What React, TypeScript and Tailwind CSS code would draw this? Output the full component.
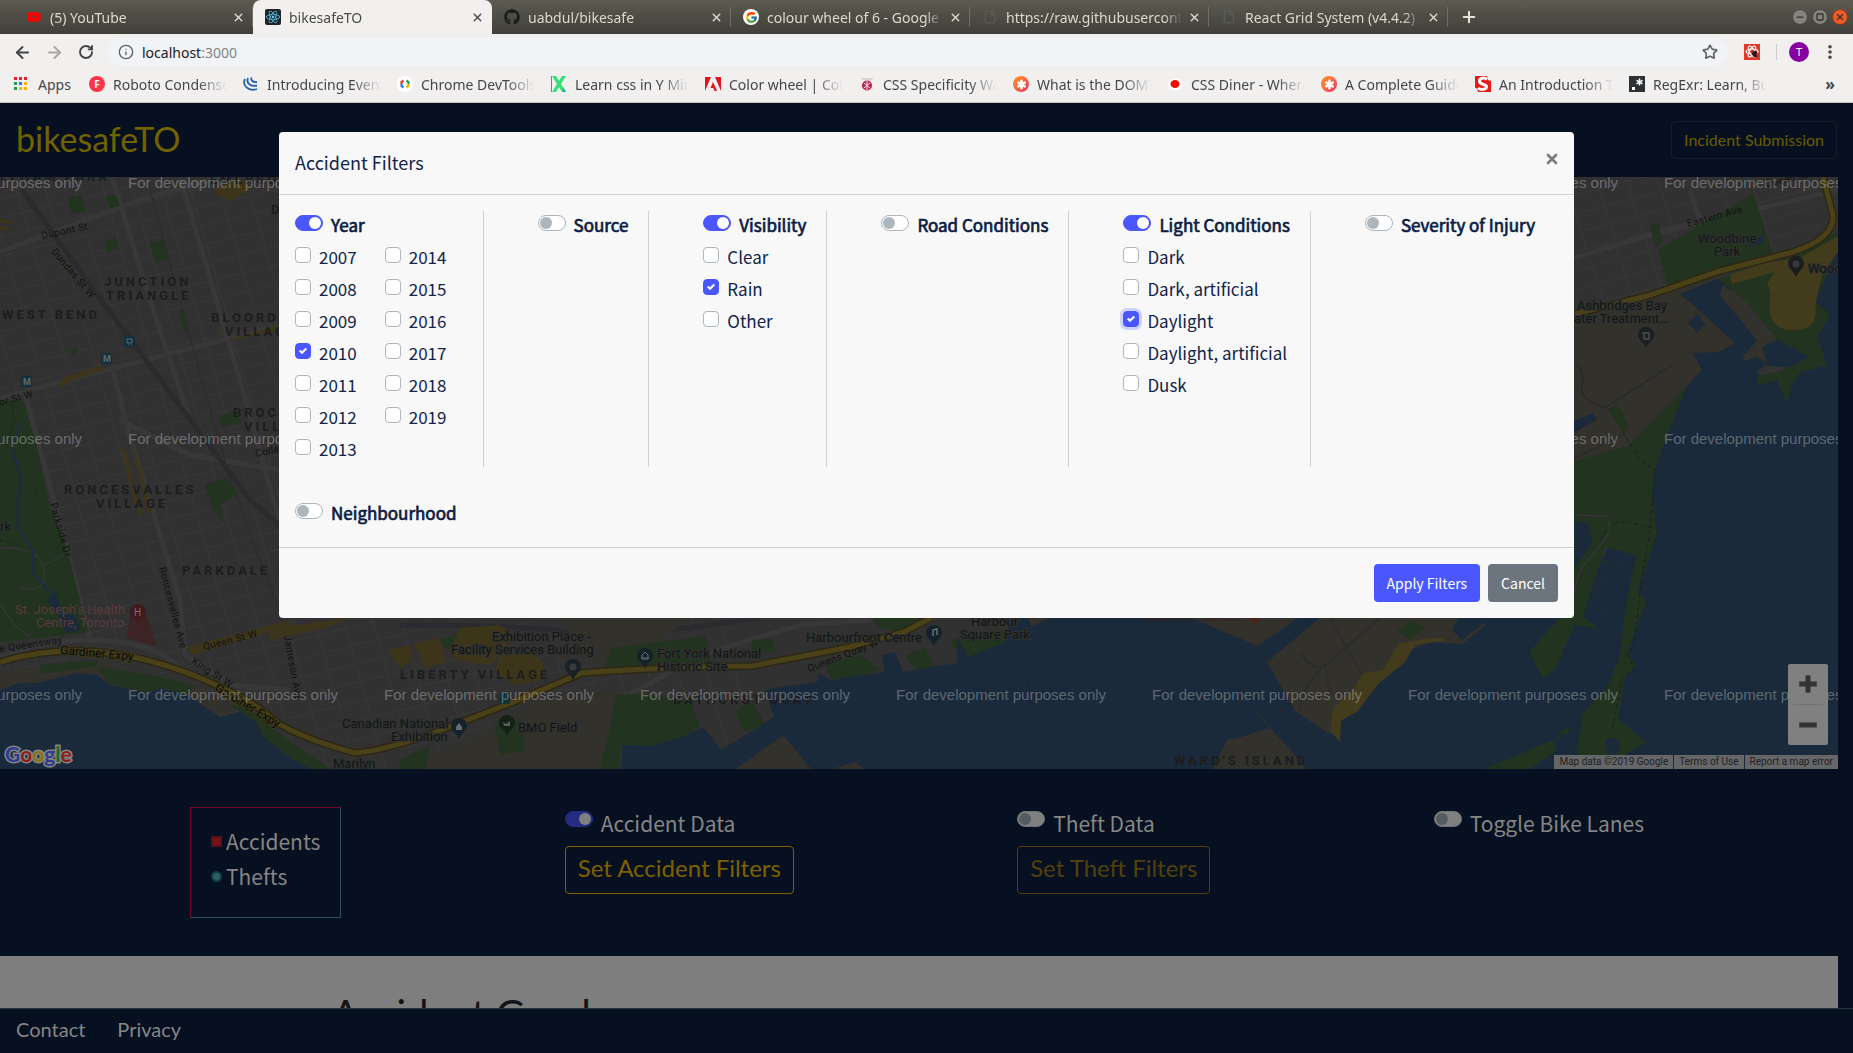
import React, { useState } from "react";
import { FaGithub, FaReact, FaYoutube } from "react-icons/fa";
import { FcGoogle } from "react-icons/fc";
import { ArrowLeft, ArrowRight, Asterisk, EllipsisVertical, File, Info, Minus, Plus, RotateCw, Square, Star, X } from "lucide-react";

/* ---------- Browser frame ---------- */

const GoogleBadge = () => (
  <span className="flex size-4 items-center justify-center rounded-full bg-white">
    <FcGoogle size={13} />
  </span>
);

const tabs = [
  { title: "(5) YouTube", icon: <FaYoutube size={14} color="#ff0000" /> },
  {
    title: "bikesafeTO",
    active: true,
    icon: (
      <span className="flex size-4 items-center justify-center rounded-xs bg-[#20232a]">
        <FaReact size={14} color="#5ed3f3" />
      </span>
    ),
  },
  { title: "uabdul/bikesafe", icon: <FaGithub size={16} color="#1c1c1a" /> },
  { title: "colour wheel of 6 - Google Search", icon: <GoogleBadge /> },
  { title: "https://raw.githubusercontent.com", icon: <File size={14} color="#5d5d58" strokeWidth={2} /> },
  { title: "React Grid System (v4.4.2)", icon: <File size={14} color="#5d5d58" strokeWidth={2} /> },
];

function TabStrip() {
  return (
    <div className="flex h-[34px] shrink-0 items-stretch bg-linear-to-b from-[#5c5b50] to-[#403f3a] pl-[14px]">
      {tabs.map((t) => (
        <div
          key={t.title}
          className={
            t.active
              ? "flex w-[239px] min-w-0 items-center rounded-t-lg bg-[#f2f0ef] pl-3 text-[#4a4a48]"
              : "flex w-[239px] min-w-0 items-center pl-3 text-[#dcd9cd]"
          }
        >
          <span className="flex w-4 shrink-0 justify-center">{t.icon}</span>
          <span className="ml-2 min-w-0 flex-1 overflow-hidden mask-r-from-90% text-[14px] whitespace-nowrap">{t.title}</span>
          <button aria-label={"Close " + t.title} className="mr-[6px] ml-1 flex w-4 shrink-0 justify-center">
            <X size={13} strokeWidth={2.5} />
          </button>
          <span className={t.active ? "h-5 w-px shrink-0" : "h-5 w-px shrink-0 bg-[#6e6d66]"} />
        </div>
      ))}
      <button aria-label="New tab" className="ml-3 text-[#e5e2d8]">
        <Plus size={18} strokeWidth={2.8} />
      </button>
      <div className="ml-auto flex items-center gap-1 pr-[5px] text-[#33322e]">
        <button aria-label="Minimise" className="flex size-4 items-center justify-center rounded-full border border-[#45443f] bg-[#85847c]">
          <Minus size={10} strokeWidth={3} />
        </button>
        <button aria-label="Maximise" className="flex size-4 items-center justify-center rounded-full border border-[#45443f] bg-[#85847c]">
          <Square size={8} strokeWidth={4} />
        </button>
        <button aria-label="Close window" className="flex size-4 items-center justify-center rounded-full border border-[#8a3a1d] bg-[#ef5a29]">
          <X size={10} strokeWidth={3} />
        </button>
      </div>
    </div>
  );
}

function Toolbar() {
  return (
    <div className="flex h-9 shrink-0 items-center bg-[#f2f0ef] pr-[14px] pl-3">
      <button aria-label="Back" className="flex w-5 justify-center text-[#444]">
        <ArrowLeft size={19} strokeWidth={2.5} />
      </button>
      <button aria-label="Forward" className="ml-3 flex w-5 justify-center text-[#a9a8a6]">
        <ArrowRight size={19} strokeWidth={2.5} />
      </button>
      <button aria-label="Reload" className="ml-3 flex w-5 justify-center text-[#444]">
        <RotateCw size={16} strokeWidth={2.8} />
      </button>
      <div className="ml-3 flex h-7 flex-1 items-center rounded-full bg-[#f1f3f6] px-[10px]">
        <Info size={16} color="#5f6368" />
        <span className="relative ml-2 flex-1 text-[14px]">
          <input
            aria-label="Address"
            defaultValue="localhost:3000"
            className="absolute inset-0 w-full bg-transparent text-transparent outline-none"
          />
          <span className="text-[#202124]">localhost</span>
          <span className="text-[#80868b]">:3000</span>
        </span>
        <button aria-label="Bookmark this page">
          <Star size={16} color="#5f6368" strokeWidth={2.5} />
        </button>
      </div>
      <span className="ml-4 flex size-4 items-center justify-center bg-[#e0392b]">
        <svg viewBox="0 0 16 16" className="size-4" fill="none" stroke="#fff" strokeWidth="1.200">
          <ellipse cx="8" cy="7.500" rx="6" ry="2.500" />
          <ellipse cx="8" cy="7.500" rx="6" ry="2.500" transform="rotate(60 8 7.500)" />
          <ellipse cx="8" cy="7.500" rx="6" ry="2.500" transform="rotate(120 8 7.500)" />
          <path d="M9 7l4 6M8 9l3 4M11 7l2 3" stroke="#2a1a18" strokeWidth="2" />
        </svg>
      </span>
      <span className="ml-4 h-4 w-px bg-[#cfcdcb]" />
      <span className="ml-3 flex size-5 items-center justify-center rounded-full bg-[#8400a0] text-[11px] text-white">T</span>
      <button aria-label="Menu" className="ml-3 text-[#444]">
        <EllipsisVertical size={18} strokeWidth={2.8} />
      </button>
    </div>
  );
}

const AsteriskBadge = () => (
  <span className="flex size-4 items-center justify-center rounded-full bg-linear-to-br from-[#ff9800] to-[#ee1458]">
    <Asterisk size={15} color="#fff" strokeWidth={4} />
  </span>
);

const bookmarks = [
  {
    t: "Roboto Condensed",
    icon: <span className="flex size-4 items-center justify-center rounded-full bg-[#fb3449] text-[10px] font-bold text-white">F</span>,
  },
  {
    t: "Introducing Events",
    icon: (
      <svg viewBox="0 0 16 16" className="size-4" fill="none" stroke="#1f5fa8" strokeWidth="1.800">
        <path d="M2 3c-3 6 3 13 12 10M5 2c-2 5 2 9 9 7.500M8.500 1.500c-1 3 1.500 5 5.500 4.500" />
      </svg>
    ),
  },
  {
    t: "Chrome DevTools",
    icon: (
      <svg viewBox="0 0 16 16" className="size-4" fill="none" strokeWidth="2.200">
        <circle cx="8" cy="8" r="8" fill="#fff" />
        <path d="M6.500 4.500 4.500 6v2" stroke="#e33b2e" />
        <path d="M4.500 8v2l2 1.500" stroke="#2f7be5" />
        <path d="m9.500 4.500 2 1.500v2" stroke="#1e9e55" />
        <path d="M11.500 8v2l-2 1.500" stroke="#f4b400" />
      </svg>
    ),
  },
  {
    t: "Learn css in Y Minutes",
    icon: (
      <svg viewBox="0 0 16 16" className="size-4">
        <path d="M1 0h4l10 16h-4z" fill="#3ddc74" />
        <path d="M11 0h4L5 16H1z" fill="#35e07e" />
        <path d="M0 0h1v16H0zM12 11l3 5h-3z" fill="#12a0e0" />
      </svg>
    ),
  },
  {
    t: "Color wheel | Color schemes",
    icon: (
      <svg viewBox="0 0 16 16" className="size-4">
        <path d="M0 1h6L0 15zM10 1h6v14zM8 6l4 9H9.500L8.300 12H5.500z" fill="#e1151b" />
      </svg>
    ),
  },
  {
    t: "CSS Specificity Wars",
    icon: (
      <svg viewBox="0 0 16 16" className="size-4">
        <path d="M1 2h14l-3 2H4z" fill="#d5d3d2" />
        <circle cx="8" cy="9.500" r="5" fill="#c2224f" />
        <path d="m5 7 6 5M11 7l-6 5M8 5v9" stroke="#f2f0ef" />
      </svg>
    ),
  },
  { t: "What is the DOM?", icon: <AsteriskBadge /> },
  {
    t: "CSS Diner - Where we feast",
    icon: (
      <svg viewBox="0 0 16 16" className="size-4">
        <ellipse cx="8" cy="8.500" rx="7.500" ry="6" fill="#fff" />
        <ellipse cx="8" cy="8" rx="4.500" ry="4" fill="#ee1000" />
      </svg>
    ),
  },
  { t: "A Complete Guide", icon: <AsteriskBadge /> },
  {
    t: "An Introduction To",
    icon: (
      <svg viewBox="0 0 16 16" className="size-4">
        <path d="M0 0h16v16H0z" fill="#ea1a14" />
        <path d="M0 12c2-1 2 2 3 4H0zM16 0v5l-3-1-1-4z" fill="#f2f0ef" />
        <path d="M12 3.500C9.500 1 4 2 4.500 5.500S12 8 11.500 11 5 14 3 12" fill="none" stroke="#fff" strokeWidth="3" />
      </svg>
    ),
  },
  {
    t: "RegExr: Learn, Build",
    icon: (
      <span className="flex size-4 items-center justify-center bg-[#2c3135]">
        <svg viewBox="0 0 16 16" className="size-4" stroke="#fff" strokeWidth="1.500">
          <path d="M3 11h3v3H3z" fill="#fff" stroke="none" />
          <path d="M10.500 2.500v7M7.500 4.300l6 3.500M13.500 4.300l-6 3.500" />
        </svg>
      </span>
    ),
  },
];

const appColours = ["#ea1c2c", "#ea1c2c", "#ea1c2c", "#1e9e55", "#3b78e7", "#f4b400", "#1e9e55", "#f4b400", "#f4b400"];

function BookmarksBar() {
  return (
    <div className="flex h-[33px] shrink-0 items-center border-b border-[#c9c7c5] bg-[#f2f0ef] pb-1 pl-[14px] text-[14px] text-[#45454a]">
      <a href="#apps" className="flex items-center">
        <svg viewBox="0 0 14 14" className="size-[14px]">
          {appColours.map((c, i) => (
            <rect key={i} x={(i % 3) * 5} y={Math.floor(i / 3) * 5} width="3" height="3" fill={c} />
          ))}
        </svg>
        <span className="ml-[10px] w-[51px]">Apps</span>
      </a>
      {bookmarks.map((b) => (
        <a key={b.t} href="#bookmark" className="flex w-[154px] shrink-0 items-center gap-2 pr-4">
          <span className="shrink-0">{b.icon}</span>
          <span className="flex-1 overflow-hidden mask-r-from-75% whitespace-nowrap">{b.t}</span>
        </a>
      ))}
      <button aria-label="More bookmarks" className="mr-[18px] ml-auto text-[16px] font-bold">
        »
      </button>
    </div>
  );
}

/* ---------- Map ---------- */

const C = {
  land: "#313131",
  road: "#383838",
  street: "#363636",
  rail: "#2b2b2f",
  brown: "#32312c",
  green: "#22331f",
  water: "#1b2a3a",
  sand: "#423c1c",
  hwy: "#4a4118",
  hwyEdge: "#2d2815",
};

const watermark = [-128, 128, 384, 640, 896, 1152, 1408, 1664];

const Pin = ({ x, y, fill = "#15222a", children }: { x: number; y: number; fill?: string; children?: React.ReactNode }) => (
  <g>
    <path d={`M${x} ${y + 17}c-2-6-8-8-8-13a8 8 0 1 1 16 0c0 5-6 7-8 13z`} fill={fill} />
    {children ?? <circle cx={x} cy={y + 4} r="3.500" fill="#3a3a3a" />}
  </g>
);

const Area = ({ x, y, s = 13, children }: { x: number; y: number; s?: number; children: string }) => (
  <text x={x} y={y} fontSize={s} fontWeight="700" letterSpacing="3" fill="#1c1d1e">
    {children}
  </text>
);

function MapView() {
  const longStreets = Array.from({ length: 42 }, (_, i) => 180 + i * 19);
  const crossStreets = Array.from({ length: 28 }, (_, i) => -190 + i * 29);
  const eastStreets = Array.from({ length: 11 }, (_, i) => 1440 + i * 31);
  return (
    <svg
      viewBox="0 177 1838 592"
      preserveAspectRatio="xMinYMin slice"
      className="block h-full w-full font-[Roboto,sans-serif]"
      role="img"
      aria-label="Map of Toronto"
    >
      <rect x="0" y="177" width="1838" height="592" fill={C.land} />
      <g stroke={C.street} strokeWidth="1.500">
        {longStreets.map((y) => (
          <path key={y} d={`M0 ${y}L620 ${y - 150}`} />
        ))}
        {crossStreets.map((x) => (
          <path key={x} d={`M${x} 177L${x + 170} 769`} />
        ))}
        {longStreets.slice(0, 14).map((y) => (
          <path key={"e" + y} d={`M1560 ${y}L1838 ${y - 74}`} />
        ))}
        {eastStreets.map((x) => (
          <path key={"e" + x} d={`M${x} 177L${x + 70} 400`} />
        ))}
      </g>
      <g stroke={C.road} strokeWidth="5" fill="none">
        <path d="M0 252L140 200 220 177" />
        <path d="M0 398L30 390 280 325" />
        <path d="M112 177L150 300 190 420" />
        <path d="M180 177L240 380 279 520" />
        <path d="M24 390L68 553 90 640" />
        <path d="M112 365L125 420 180 600 185 655" />
        <path d="M120 420L190 455 280 470" />
        <path d="M620 700L700 655 800 625 900 618" />
        <path d="M1560 262L1660 232 1838 190" />
        <path d="M1690 190L1715 270" />
        <path d="M185 655L230 685 290 690" />
      </g>
      <g fill="none" stroke={C.rail} strokeWidth="5">
        <path d="M22 190L90 285 250 500 285 530" />
        <path d="M400 625Q520 625 570 632T760 618" />
      </g>
      <path d="M150 190L185 320 230 480 290 640" fill="none" stroke={C.rail} strokeWidth="1" />

      {/* industrial land */}
      <g fill={C.brown}>
        <path d="M1560 320L1720 275 1745 330 1690 390 1628 446 1560 470z" />
        <path d="M560 618H690L640 655 590 665z" />
        <path d="M540 700L620 690 610 769H390L470 740z" />
        <path d="M0 672L97 662 200 688 240 715 180 715 0 695z" />
      </g>

      {/* parks */}
      <g fill={C.green}>
        <path d="M0 402L23 400 37 447 48 500 68 553 88 632 0 642z" />
        <path d="M67 197L82 196 86 211 72 214z" />
        <path d="M106 197L116 195 120 206 110 208z" />
        <path d="M105 242L116 238 119 249 107 252z" />
        <path d="M150 243L162 240 168 259 156 263z" />
        <path d="M179 311L184 309 189 330 184 331z" />
        <path d="M70 350L76 347 78 354 73 355z" />
        <path d="M219 418L232 412 243 422 222 427z" />
        <path d="M205 484L226 478 237 493 220 505 224 522 213 510z" />
        <path d="M97 667L150 675 195 685 187 695 147 692 110 684z" />
        <path d="M40 665L97 660 97 666 40 674z" />
        <path d="M227 703L250 709 285 738 330 769H295L263 740 257 723 240 712z" />
        <path d="M604 670L612 648 705 636 711 660 680 665z" />
        <path d="M752 640L772 638 775 650 752 655z" />
        <path d="M615 695L640 694 690 700 700 726 680 738 650 746 622 745 618 769H600L612 720z" />
        <path d="M735 712L752 700 765 725 745 732z" />
        <path d="M400 760L430 745 425 769H400z" />
        <path d="M495 725L520 720 525 750 500 755z" />
        <path d="M440 640L462 632 468 645 448 650z" />
        <path d="M870 618H930L905 632 880 628z" />
        <path d="M825 665L860 655 880 670 850 680 830 678z" />
        <path d="M905 655L925 648 935 668 918 672zM950 640L1003 630V645L962 660z" />
        <path d="M1658 250L1753 193 1773 254 1668 285z" />
        <path d="M1650 225L1658 222 1663 242 1655 246z" />
      </g>
      <path d="M12 402L14 420 6 450M28 490H47M0 540L20 545" stroke="#1a281a" fill="none" strokeDasharray="3 3" />
      <path d="M0 548Q40 545 44 570T20 587M44 565L68 553M0 605L15 625 30 637" fill="none" stroke="#303530" strokeWidth="2" />

      {/* commercial strips */}
      <g fill="#3d351a">
        <path d="M215 190L238 178 252 188 240 195 230 200 216 195z" />
        <path d="M62 378L100 366 103 370 68 382 62 390 60 384z" />
        <path d="M228 340L278 325V330L230 341zM219 326h3v8h-3z" />
        <path d="M0 218L14 222V224L0 222zM0 227h9v3H0z" />
        <path d="M121 441L127 455 135 490 143 515 139 515 131 490 123 455z" />
        <path d="M132 447L138 460 152 512 147 512z" />
        <path d="M187 647L290 620V626L192 655z" />
        <path d="M270 628L350 618 325 628 270 640z" />
        <path d="M388 650L410 645 412 660 400 668zM414 644L440 638 446 662 425 668zM450 650L460 628 500 625 515 635 490 665 455 660z" />
        <path d="M500 655L530 652 545 665 540 680 515 685 495 672z" />
      </g>

      {/* highway west */}
      <path d="M0 657Q60 636 110 641T180 668" fill="none" stroke={C.road} strokeWidth="5" />
      <path
        d="M0 662Q50 647 100 652T200 678T270 717T355 753Q390 750 449 727L511 703 582 673Q620 670 672 668T752 666L850 647 904 632 931 618"
        fill="none"
        stroke={C.hwyEdge}
        strokeWidth="8"
      />
      <path
        d="M0 662Q50 647 100 652T200 678T270 717T355 753Q390 750 449 727L511 703 582 673Q620 670 672 668T752 666L850 647 904 632 931 618"
        fill="none"
        stroke={C.hwy}
        strokeWidth="5"
      />

      {/* water */}
      <g fill={C.water}>
        <path d="M0 690L20 683 37 683 77 673 97 675 110 685 147 693 160 688 187 695 220 717 240 712 257 723 263 737 290 757 310 769H0z" />
        <path d="M620 769L623 745 650 746 680 738 703 727 721 750 774 717 765 690 779 687 817 682 819 673 830 680 850 677 885 672 882 655 895 652 903 672 957 663 957 637 968 657 1003 643 1012 618H1600V769z" />
        <path d="M1838 240L1815 302 1830 314 1817 337 1827 365 1800 372 1790 388 1787 403 1777 380 1760 376 1757 372 1765 365 1793 368 1810 357 1777 339 1760 345 1767 362 1757 357 1745 361 1742 357 1757 341 1747 326 1720 294 1733 288 1717 279 1680 294 1692 304 1735 343 1720 352 1693 353 1702 370 1687 386 1660 440 1574 618V769H1838z" />
        <path d="M1705 325L1698 314 1688 323 1697 333z" />
        <path d="M1574 421L1593 413 1597 419 1574 433z" />
        <path d="M1755 240L1764 234 1763 243 1745 247z" />
        <path d="M47 600L55 590 62 612 75 615 80 630 65 632 60 618z" />
      </g>
      <path d="M21 422L12 447 22 480 17 500 18 527 33 550 33 573 50 593" fill="none" stroke="#1a2c48" strokeWidth="2" />

      {/* islands, piers and the spit */}
      <g fill={C.brown}>
        <path d="M736 769L783 735 811 769zM832 769L855 762 864 769z" />
        <path d="M1029 618L1031 627 1049 618zM1191 618L1258 646 1298 618z" />
        <path d="M1320 618L1267 662 1296 712 1330 734 1379 683 1403 653 1430 642 1462 644 1486 625 1484 623 1462 640 1452 630 1458 618z" />
        <path d="M1213 769L1227 740 1241 737 1270 728 1288 747 1306 769z" />
      </g>
      <path d="M1254 708L1270 728" stroke={C.brown} />
      <path
        d="M1380 618L1320 670Q1300 690 1300 712M1300 652Q1312 672 1325 665L1330 695M1330 618L1365 680"
        fill="none"
        stroke="#2b2b2d"
        strokeWidth="1.500"
      />
      <path
        d="M1399 643L1432 638 1444 638 1444 641 1415 645 1405 662 1379 683 1357 712 1341 720 1340 742 1331 732 1332 710 1355 687 1363 673 1383 670z"
        fill={C.sand}
      />
      <g fill={C.green}>
        <path d="M1687 386L1667 435 1655 470 1652 493 1657 534 1638 592 1647 602 1640 617 1628 652 1636 666 1625 676 1618 719 1646 742 1623 756 1590 769H1575L1582 715 1607 687 1620 656 1625 610 1636 555 1605 547 1583 617 1599 629 1575 625 1555 670 1543 678 1529 652 1560 618V465L1628 446z" />
        <path d="M1608 409L1618 404 1629 428 1623 432z" />
        <path d="M1484 769L1513 757 1553 740 1557 750 1530 769zM1555 738L1568 726 1570 732z" />
        <path d="M1717 279L1770 262 1838 232 1838 250 1815 302 1830 314 1817 337 1827 365 1800 372 1790 388 1787 403 1777 380 1757 385 1757 376 1780 372 1810 357 1777 339 1745 300z" />
        <path d="M1397 630L1412 620 1425 628 1410 640z" />
      </g>
      <path d="M1722 285L1745 300 1750 320 1777 340 1762 347 1767 362 1757 357 1742 358 1757 341 1745 325 1720 296z" fill={C.brown} />
      <path d="M1574 522L1588 522 1592 543 1575 569z" fill={C.water} />
      <path d="M1605 740Q1620 735 1620 745T1608 756z" fill={C.water} />
      <path d="M1730 275L1768 262 1800 258 1838 236V252L1822 275 1815 305Q1820 330 1793 330T1770 300Q1772 292 1767 283L1775 272 1732 284z" fill={C.sand} />
      <path d="M1575 314L1647 296 1720 271 1793 252Q1835 238 1833 215L1823 177" fill="none" stroke={C.hwyEdge} strokeWidth="8" />
      <path d="M1575 314L1647 296 1720 271 1793 252Q1835 238 1833 215L1823 177" fill="none" stroke={C.hwy} strokeWidth="5" />
      <path
        d="M1623 432L1640 460 1655 470 1650 530 1640 590 1635 640 1628 655 1634 668 1622 680 1612 730"
        fill="none"
        stroke="#16221a"
        strokeDasharray="4 3"
      />
      <path d="M1600 540Q1612 520 1625 522T1652 528" fill="none" stroke="#16221a" strokeDasharray="4 3" />
      <path d="M1575 515L1607 516Q1615 530 1600 545L1588 560Q1578 570 1575 590" fill="none" stroke="#343534" strokeWidth="1.500" />
      <path d="M1574 362Q1585 370 1582 385T1605 408L1672 365M1574 458L1625 434" fill="none" stroke="#2a2a2c" strokeWidth="1.500" />
      <path
        d="M1603 561L1625 567M1601 570L1622 576M1598 579L1619 585M1595 588L1617 594M1592 597L1612 603M1588 606L1608 612"
        stroke="#252d31"
      />
      <path d="M1018 645Q1020 720 960 769M1020 645Q1035 700 1030 769M1020 640L1128 766" fill="none" stroke="#182433" strokeDasharray="5 4" />

      {/* hospital */}
      <path d="M131 612L146 614 156 646 127 638z" fill="#3d2323" />
      <Pin x={138} y={608} fill="#421a1c">
        <text x="134" y="616" fontSize="10" fill="#7c6a6a">
          H
        </text>
      </Pin>

      {/* transit stations */}
      <g fill="#13303c">
        <rect x="124" y="336" width="11" height="11" rx="2" />
        <rect x="101" y="353" width="11" height="11" rx="2" />
        <rect x="21" y="376" width="11" height="11" rx="2" />
        <rect x="499" y="693" width="11" height="11" rx="2" />
      </g>
      <g fill="#5b6c72" fontSize="9" fontWeight="700">
        <text x="103" y="362">
          M
        </text>
        <text x="23" y="385">
          M
        </text>
      </g>
      <path d="M127 339h5v4h-5zM128 345h1M131 345h1" fill="none" stroke="#5b6c72" />

      {/* place names */}
      <Area x={0} y={181}>ELHAM PARK</Area>
      <Area x={210} y={184}>EMERSON</Area>
      <Area x={104} y={286}>JUNCTION</Area>
      <Area x={106} y={300}>TRIANGLE</Area>
      <Area x={2} y={319}>WEST BEND</Area>
      <Area x={211} y={322}>BLOORDALE</Area>
      <Area x={225} y={336}>VILLAGE</Area>
      <Area x={233} y={417}>BROCKTON</Area>
      <Area x={244} y={431}>VILLAGE</Area>
      <Area x={271} y={214}>DUFFERIN</Area>
      <Area x={64} y={494}>RONCESVALLES</Area>
      <Area x={96} y={508}>VILLAGE</Area>
      <Area x={182} y={575}>PARKDALE</Area>
      <Area x={400} y={679}>LIBERTY VILLAGE</Area>
      <Area x={673} y={704}>BATHURST QUAY</Area>
      <Area x={1174} y={765}>WARD'S ISLAND</Area>

      <g fontSize="10" fill="#121212" letterSpacing="0.4">
        <text transform="translate(42 239) rotate(-12)">Dupont St</text>
        <text transform="translate(51 252) rotate(50)">Dundas St W</text>
        <text transform="translate(0 406) rotate(-16)">or St W</text>
        <text transform="translate(50 504) rotate(74)">Parkside Dr</text>
        <text transform="translate(159 568) rotate(75)">Roncesvalles Ave</text>
        <text transform="translate(0 652) rotate(-8)">e Queensway</text>
        <text transform="translate(204 650) rotate(-14)">Queen St W</text>
        <text transform="translate(191 663) rotate(33)">King St W</text>
        <text transform="translate(284 636) rotate(80)">Jameson Ave</text>
        <text transform="translate(256 457) rotate(-12)">College</text>
        <text transform="translate(809 672) rotate(-21)">Queens Quay W</text>
        <text transform="translate(1688 227) rotate(-15)">Eastern Ave</text>
        <text transform="translate(1766 187) rotate(-12)">Queen St E</text>
      </g>
      <g fontSize="12" fill="#0a0a08" stroke="#3d381a" strokeWidth="2" paintOrder="stroke">
        <text transform="translate(60 654) rotate(5)">Gardiner Expy</text>
        <text transform="translate(214 690) rotate(31)">Gardiner Expy</text>
      </g>

      <g fontSize="13" fill="#121617" stroke="#30312f" strokeWidth="2" paintOrder="stroke">
        <text x="492" y="641">
          Exhibition Place -
        </text>
        <text x="451" y="654">
          Facility Services Building
        </text>
        <text x="657" y="658">
          Fort York National
        </text>
        <text x="657" y="671">
          Historic Site
        </text>
        <text x="806" y="642">
          Harbourfront Centre
        </text>
        <text x="971" y="626">
          Harbour
        </text>
        <text x="960" y="639">
          Square Park
        </text>
        <text x="342" y="728">
          Canadian National
        </text>
        <text x="391" y="741">
          Exhibition
        </text>
        <text x="518" y="732">
          BMO Field
        </text>
        <text x="333" y="768">
          Marilyn
        </text>
        <text x="0" y="531">
          rk
        </text>
        <text x="1698" y="243">
          Woodbine
        </text>
        <text x="1714" y="256">
          Park
        </text>
        <text x="1808" y="273">
          Woodbine
        </text>
        <text x="1577" y="310">
          Ashbridges Bay
        </text>
        <text x="1574" y="323">
          ater Treatment...
        </text>
      </g>
      <text x="1146" y="621" fontSize="13" fill="#33221c">
        Cabana Pool Bar
      </text>
      <path d="M1248 618h12l-6 8z" fill="#4a2418" />
      <g fontSize="13" fill="#5a3a3c">
        <text x="15" y="614">
          St. Joseph's Health
        </text>
        <text x="36" y="627">
          Centre, Toronto
        </text>
      </g>
      <Pin x={573} y={663} fill="#1a2126" />
      <Pin x={645} y={652}>
        <path d="M641 658h8M642 655l3-3 3 3v4h-6z" fill="none" stroke="#63706f" />
      </Pin>
      <Pin x={459} y={722}>
        <path d="M456 730v-3l3-4 3 4v3z" fill="#63706f" />
      </Pin>
      <Pin x={507} y={719} fill="#142115">
        <path d="M503 722l3 2 4-3v5h-6z" fill="#56624f" />
      </Pin>
      <Pin x={934} y={629}>
        <path d="M933 636v-6l4-1v6" fill="none" stroke="#63706f" strokeWidth="1.500" />
      </Pin>
      <Pin x={1796} y={260} fill="#1a1d1f" />
      <Pin x={1646} y={331} fill="#1a1f23">
        <path d="M1642 333h8M1643 339h7M1644 334v4M1649 334v4" stroke="#606668" />
      </Pin>

      <g fontSize="15" fill="#fff" fillOpacity="0.3" fontFamily="Liberation Sans, sans-serif">
        {[188, 444, 700].map((y) =>
          watermark.map((x) => (
            <text key={x + "-" + y} x={x} y={y}>
              For development purposes only
            </text>
          )),
        )}
      </g>
      <g fontSize="21" fontWeight="700" stroke="#848484" strokeWidth="3" paintOrder="stroke" fontFamily="Lato, sans-serif">
        <text x="5" y="762">
          <tspan fill="#2f3a90">G</tspan>
          <tspan fill="#8a1f1a">o</tspan>
          <tspan fill="#8a7410">o</tspan>
          <tspan fill="#2f3a90">g</tspan>
          <tspan fill="#16692e">l</tspan>
          <tspan fill="#8a1f1a">e</tspan>
        </text>
      </g>
    </svg>
  );
}

/* ---------- Form controls ---------- */

const slug = (s: string) => s.toLowerCase().replace(/[^a-z0-9]+/g, "-");

function Switch({ id, label, on = false }: { id: string; label: string; on?: boolean }) {
  return (
    <div className="flex h-8 items-start">
      <input
        id={id}
        type="checkbox"
        role="switch"
        defaultChecked={on}
        className="mt-1 h-4 w-7 shrink-0 appearance-none rounded-full border border-[#adb5bd] bg-white before:mt-px before:ml-px before:block before:size-3 before:rounded-full before:bg-[#adb5bd] checked:border-[#4a57ff] checked:bg-[#4a57ff] checked:before:ml-[13px] checked:before:bg-white"
      />
      <label
        htmlFor={id}
        className="ml-2 text-[17px] leading-7 whitespace-nowrap text-[#0b1d42] [-webkit-text-stroke:0.7px_#0b1d42]"
      >
        {label}
      </label>
    </div>
  );
}

function DataSwitch({ id, label, on = false }: { id: string; label: string; on?: boolean }) {
  return (
    <div className="flex h-[39px] items-start">
      <input
        id={id}
        type="checkbox"
        role="switch"
        defaultChecked={on}
        className="mt-1 h-4 w-7 shrink-0 appearance-none rounded-full border border-[#6f7276] bg-[#808080] before:mt-px before:ml-px before:block before:size-3 before:rounded-full before:bg-[#575b5f] checked:border-[#252b80] checked:bg-[#252b80] checked:before:ml-[13px] checked:before:bg-[#808080]"
      />
      <label htmlFor={id} className="ml-2 text-[21px] leading-8 whitespace-nowrap text-[#858585]">
        {label}
      </label>
    </div>
  );
}

function Check({ group, label, on = false, focused = false }: { group: string; label: string; on?: boolean; focused?: boolean }) {
  const id = group + "-" + slug(label);
  return (
    <div className="flex h-8 items-start">
      <span className="relative mt-1 size-4 shrink-0">
        <input
          id={id}
          type="checkbox"
          defaultChecked={on}
          className={
            focused
              ? "peer block size-4 appearance-none rounded border border-[#adb5bd] bg-white ring-3 ring-[#cfd2ff] checked:border-[#4a57ff] checked:bg-[#4a57ff]"
              : "peer block size-4 appearance-none rounded border border-[#adb5bd] bg-white checked:border-[#4a57ff] checked:bg-[#4a57ff]"
          }
        />
        <svg viewBox="0 0 8 8" className="pointer-events-none absolute inset-1 size-2 opacity-0 peer-checked:opacity-100">
          <path fill="#fff" d="M6.564.75l-3.590 3.612-1.538-1.550L0 4.260 2.974 7.250 8 2.193z" />
        </svg>
      </span>
      <label htmlFor={id} className="ml-2 text-[17px] leading-7 whitespace-nowrap">
        {label}
      </label>
    </div>
  );
}

/* ---------- Filter dialog ---------- */

type Option = { label: string; on?: boolean; focused?: boolean };
type Filter = { title: string; on?: boolean; columns: Option[][] };

const filters: Filter[] = [
  {
    title: "Year",
    on: true,
    columns: [
      [{ label: "2007" }, { label: "2008" }, { label: "2009" }, { label: "2010", on: true }, { label: "2011" }, { label: "2012" }, { label: "2013" }],
      [{ label: "2014" }, { label: "2015" }, { label: "2016" }, { label: "2017" }, { label: "2018" }, { label: "2019" }],
    ],
  },
  { title: "Source", columns: [] },
  { title: "Visibility", on: true, columns: [[{ label: "Clear" }, { label: "Rain", on: true }, { label: "Other" }]] },
  { title: "Road Conditions", columns: [] },
  {
    title: "Light Conditions",
    on: true,
    columns: [
      [
        { label: "Dark" },
        { label: "Dark, artificial" },
        { label: "Daylight", on: true, focused: true },
        { label: "Daylight, artificial" },
        { label: "Dusk" },
      ],
    ],
  },
  { title: "Severity of Injury", columns: [] },
];

function FilterDialog({ onClose }: { onClose: () => void }) {
  return (
    <div
      role="dialog"
      aria-modal="true"
      aria-labelledby="dialog-title"
      className="absolute inset-x-0 top-[132px] mx-auto w-[1295px] max-w-full rounded bg-[#f8f8f8] font-['Noto_Sans_CJK_SC',sans-serif] text-[#12244a]"
    >
      <header className="flex items-start justify-between border-b border-[#d0d2d4] px-4 pt-4 pb-[18px]">
        <h2 id="dialog-title" className="text-[18px] leading-7">
          Accident Filters
        </h2>
        <button aria-label="Close" onClick={onClose} className="mt-[3px] -mr-[2px] text-[#7c7c7c]">
          <X size={16} strokeWidth={4} />
        </button>
      </header>
      <div className="p-4">
        <div className="flex">
          {filters.map((f, i) => (
            <fieldset
              key={f.title}
              className={
                i === 0
                  ? "border-r border-[#cdcfd2] pr-9"
                  : i === filters.length - 1
                    ? "pl-[54px]"
                    : "border-r border-[#cdcfd2] pr-5 pl-[54px]"
              }
            >
              <Switch id={"filter-" + slug(f.title)} label={f.title} on={f.on} />
              <div className="flex gap-7">
                {f.columns.map((c, n) => (
                  <div key={n}>
                    {c.map((o) => (
                      <Check key={o.label} group={slug(f.title)} {...o} />
                    ))}
                  </div>
                ))}
              </div>
            </fieldset>
          ))}
        </div>
        <div className="mt-8">
          <Switch id="filter-neighbourhood" label="Neighbourhood" />
        </div>
      </div>
      <footer className="flex justify-end gap-2 border-t border-[#d0d2d4] p-4 text-[14px] text-white">
        <button className="h-[38px] rounded bg-[#4a57ff] px-[13px]">Apply Filters</button>
        <button onClick={onClose} className="h-[38px] rounded bg-[#6c757d] px-[13px]">
          Cancel
        </button>
      </footer>
    </div>
  );
}

/* ---------- Page ---------- */

function Controls() {
  return (
    <section className="flex h-[187px] shrink-0 items-start justify-between pt-[38px] pr-[209px] pl-[190px] font-['Noto_Sans_CJK_SC',sans-serif]">
      <ul className="h-[111px] border border-t-[#6f0a22] border-r-[#2f5259] border-b-[#2f5259] border-l-[#6f0a22] px-5 pt-4 text-[21px] leading-[35px] text-[#858585]">
        <li className="flex items-center gap-1">
          <span className="size-[11px] border-2 border-[#5a1015] bg-[#7d1016]" />
          Accidents
        </li>
        <li className="flex items-center gap-1">
          <span className="size-[11px] rounded-full border-2 border-[#0c4144] bg-[#2f5f63]" />
          Thefts
        </li>
      </ul>
      <div>
        <DataSwitch id="accident-data" label="Accident Data" on />
        <button className="h-12 rounded border border-[#7d6000] px-3 pb-1 font-[Lato,sans-serif] text-[24px] text-[#7d6000]">
          Set Accident Filters
        </button>
      </div>
      <div>
        <DataSwitch id="theft-data" label="Theft Data" />
        <button className="h-12 rounded border border-[#51400d] px-3 pb-1 font-[Lato,sans-serif] text-[24px] text-[#51400d]">
          Set Theft Filters
        </button>
      </div>
      <DataSwitch id="bike-lanes" label="Toggle Bike Lanes" />
    </section>
  );
}

export default function App() {
  const [open, setOpen] = useState(true);
  return (
    <div className="relative flex h-screen flex-col overflow-hidden bg-[#071021] font-['Noto_Sans',sans-serif]">
      <TabStrip />
      <Toolbar />
      <BookmarksBar />
      <header className="flex h-[74px] shrink-0 items-center justify-between px-4 font-[Lato,sans-serif]">
        <a href="#home" className="pb-1 text-[34px] text-[#6f6200]">
          bikesafeTO
        </a>
        <button className="h-[38px] rounded border border-[#161d28] px-3 text-[16px] text-[#6a5d00]" onClick={() => setOpen(true)}>
          Incident Submission
        </button>
      </header>
      <div className="relative mr-[15px] h-[592px] shrink-0">
        <MapView />
        <div className="absolute right-[10px] bottom-6 flex w-10 flex-col items-center rounded-xs bg-[#808080] text-[#333]">
          <button aria-label="Zoom in" className="flex h-10 items-center">
            <Plus size={30} strokeWidth={4} strokeLinecap="butt" />
          </button>
          <span className="h-px w-[30px] bg-[#737373]" />
          <button aria-label="Zoom out" className="flex h-10 items-center">
            <Minus size={30} strokeWidth={4} strokeLinecap="butt" />
          </button>
        </div>
        <div className="absolute right-0 bottom-0 flex gap-px font-[Roboto,sans-serif] text-[10px] leading-[14px] text-[#222]">
          <span className="bg-[#646668] px-[5px]">Map data ©2019 Google</span>
          <a href="#terms" className="bg-[#646668] px-[5px]">
            Terms of Use
          </a>
          <a href="#report" className="bg-[#646668] px-[5px]">
            Report a map error
          </a>
        </div>
      </div>
      <Controls />
      <section className="mr-[15px] min-h-0 flex-1 overflow-hidden bg-[#7e7e7e] pt-7 pl-[332px] font-[Lato,sans-serif]">
        <h1 className="text-[40px] text-[#121416]">Accident Graphs</h1>
      </section>
      <footer className="flex h-[45px] shrink-0 items-center gap-8 border-t border-[#27343c] px-4 pb-1 font-[Lato,sans-serif] text-[20px] text-[#858585]">
        <a href="#contact">Contact</a>
        <a href="#privacy">Privacy</a>
      </footer>
      {open && <FilterDialog onClose={() => setOpen(false)} />}
    </div>
  );
}
